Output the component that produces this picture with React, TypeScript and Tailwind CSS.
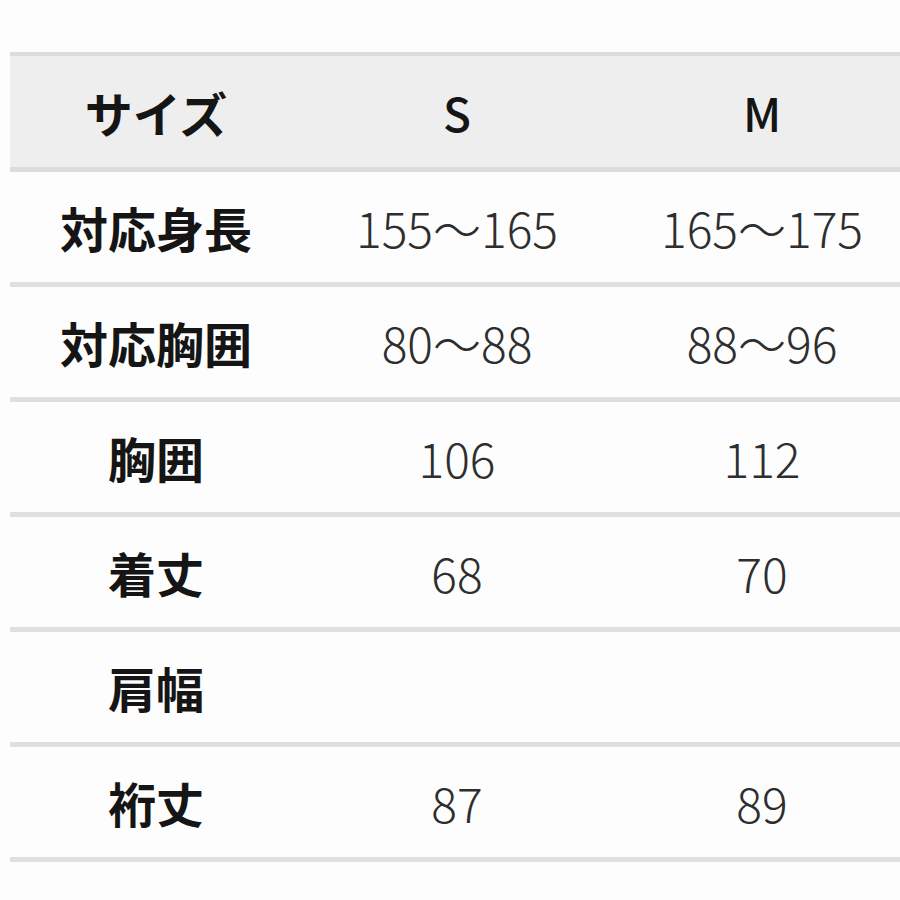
import React from "react";

const rows: { label: string; s: string; m: string }[] = [
  { label: "対応身長", s: "155〜165", m: "165〜175" },
  { label: "対応胸囲", s: "80〜88", m: "88〜96" },
  { label: "胸囲", s: "106", m: "112" },
  { label: "着丈", s: "68", m: "70" },
  { label: "肩幅", s: "", m: "" },
  { label: "裄丈", s: "87", m: "89" },
];

const labelCls =
  "[font-family:'Noto_Sans_CJK_JP',sans-serif] text-center text-[48px] font-bold text-[#151515] leading-none";
const valueCls =
  "[font-family:'Noto_Sans_CJK_JP',sans-serif] text-center text-[48px] font-light text-[#2e2e2e] leading-none";

export default function App() {
  return (
    <div className="w-[900px] h-[900px] overflow-hidden bg-[#fdfdfd] pt-[52px] pl-[10px]">
      <div className="w-[902px]">
        <div className="grid grid-cols-[292px_310px_300px] h-[120px] bg-[#efeeee] border-t-[4px] border-b-[5px] border-[#dcdcdc] items-center">
          <div className={labelCls}>サイズ</div>
          <div className="[font-family:'Noto_Sans_CJK_JP',sans-serif] text-center text-[46px] font-medium text-[#151515] leading-none">S</div>
          <div className="[font-family:'Noto_Sans_CJK_JP',sans-serif] text-center text-[46px] font-medium text-[#151515] leading-none">M</div>
        </div>
        {rows.map((r) => (
          <div
            key={r.label}
            className="grid grid-cols-[292px_310px_300px] h-[115px] border-b-[5px] border-[#dfdfdf] items-center"
          >
            <div className={labelCls}>{r.label}</div>
            <div className={valueCls}>{r.s}</div>
            <div className={valueCls}>{r.m}</div>
          </div>
        ))}
      </div>
    </div>
  );
}
